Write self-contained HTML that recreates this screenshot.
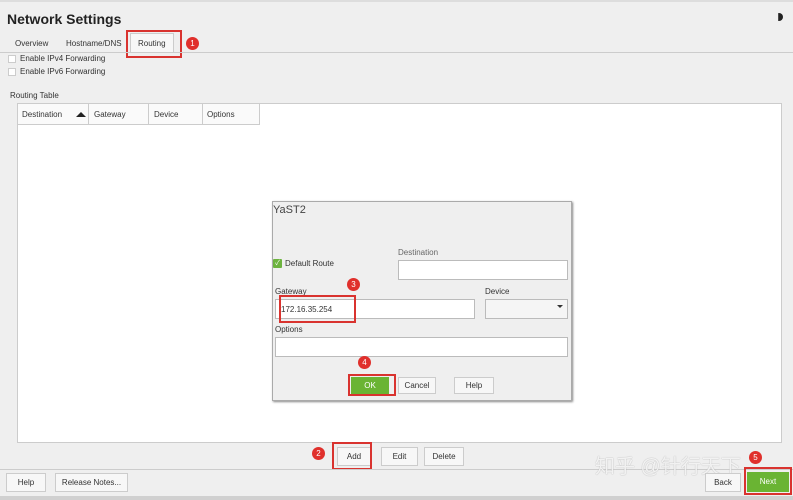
<!DOCTYPE html>
<html><head><style>
*{box-sizing:border-box}
body{margin:0;width:793px;height:500px;background:#efefef;font-family:"Liberation Sans","Noto Sans CJK SC",sans-serif;font-size:8px;color:#333;position:relative;overflow:hidden}
.a{position:absolute}
.btn{position:absolute;background:#f7f7f7;border:1px solid #ccc;font-size:8px;text-align:center;color:#333}
.red{position:absolute;border:2px solid #d9332f}
.num{position:absolute;width:13px;height:13px;border-radius:50%;background:#e0302c;color:#fff;font-size:8px;text-align:center;line-height:13px}
.in{position:absolute;background:#fff;border:1px solid #bbb}
</style></head><body>
<div class="a" style="left:0;top:0;width:793px;height:2px;background:#ddd"></div>
<div class="a" style="left:7px;top:11px;font-size:14px;font-weight:bold;color:#222">Network Settings</div>
<div class="a" style="left:775px;top:13px;width:8px;height:8px;border-radius:50%;background:#222;clip-path:inset(0 0 0 40%)"></div>
<div class="a" style="left:15px;top:39px">Overview</div>
<div class="a" style="left:66px;top:39px">Hostname/DNS</div>
<div class="a" style="left:130px;top:33px;width:44px;height:20px;background:#f7f7f7;border:1px solid #ccc;border-bottom:none"></div>
<div class="a" style="left:138px;top:39px">Routing</div>
<div class="red" style="left:126px;top:30px;width:56px;height:28px"></div>
<div class="num" style="left:186px;top:37px">1</div>
<div class="a" style="left:0;top:52px;width:793px;height:1px;background:#ccc"></div>
<div class="a" style="left:8px;top:55px;width:8px;height:8px;background:#fff;border:1px solid #ccc"></div>
<div class="a" style="left:20px;top:54px">Enable IPv4 Forwarding</div>
<div class="a" style="left:8px;top:68px;width:8px;height:8px;background:#fff;border:1px solid #ccc"></div>
<div class="a" style="left:20px;top:67px">Enable IPv6 Forwarding</div>
<div class="a" style="left:10px;top:91px">Routing Table</div>
<div class="a" style="left:17px;top:103px;width:765px;height:340px;background:#fff;border:1px solid #ccc"></div>
<div class="a" style="left:17px;top:103px;width:243px;height:22px;background:#fafafa;border:1px solid #ccc"></div>
<div class="a" style="left:88px;top:103px;width:1px;height:22px;background:#ccc"></div>
<div class="a" style="left:148px;top:103px;width:1px;height:22px;background:#ccc"></div>
<div class="a" style="left:202px;top:103px;width:1px;height:22px;background:#ccc"></div>
<div class="a" style="left:22px;top:110px">Destination</div>
<div class="a" style="left:76px;top:112px;width:0;height:0;border-left:5px solid transparent;border-right:5px solid transparent;border-bottom:5px solid #222"></div>
<div class="a" style="left:94px;top:110px">Gateway</div>
<div class="a" style="left:154px;top:110px">Device</div>
<div class="a" style="left:207px;top:110px">Options</div>
<!-- dialog -->
<div class="a" style="left:272px;top:201px;width:300px;height:200px;background:#efefef;border:1px solid #aaa;box-shadow:1px 1px 2px #888"></div>
<div class="a" style="left:273px;top:204px;font-size:11px;color:#444">YaST2</div>
<div class="a" style="left:398px;top:248px;color:#666">Destination</div>
<div class="in" style="left:398px;top:260px;width:170px;height:20px"></div>
<div class="a" style="left:273px;top:259px;width:9px;height:9px;background:#6db33f;border-radius:1px;color:#fff;font-size:7px;line-height:9px;text-align:center">✓</div>
<div class="a" style="left:285px;top:259px">Default Route</div>
<div class="a" style="left:275px;top:287px">Gateway</div>
<div class="in" style="left:275px;top:299px;width:200px;height:20px"></div>
<div class="a" style="left:281px;top:305px">172.16.35.254</div>
<div class="red" style="left:279px;top:295px;width:77px;height:28px"></div>
<div class="num" style="left:347px;top:278px">3</div>
<div class="a" style="left:485px;top:287px">Device</div>
<div class="in" style="left:485px;top:299px;width:83px;height:20px;background:#f5f5f5"></div>
<div class="a" style="left:557px;top:305px;width:0;height:0;border-left:3px solid transparent;border-right:3px solid transparent;border-top:3px solid #333"></div>
<div class="a" style="left:275px;top:325px">Options</div>
<div class="in" style="left:275px;top:337px;width:293px;height:20px"></div>
<div class="a" style="left:351px;top:377px;width:38px;height:17px;background:#6ab433;color:#fff;text-align:center;line-height:17px">OK</div>
<div class="red" style="left:348px;top:374px;width:48px;height:22px"></div>
<div class="num" style="left:358px;top:356px">4</div>
<div class="btn" style="left:398px;top:377px;width:38px;height:17px;line-height:15px">Cancel</div>
<div class="btn" style="left:454px;top:377px;width:40px;height:17px;line-height:15px">Help</div>
<!-- bottom buttons -->
<div class="num" style="left:312px;top:447px">2</div>
<div class="btn" style="left:337px;top:447px;width:34px;height:19px;line-height:17px">Add</div>
<div class="red" style="left:332px;top:442px;width:40px;height:28px"></div>
<div class="btn" style="left:381px;top:447px;width:37px;height:19px;line-height:17px">Edit</div>
<div class="btn" style="left:424px;top:447px;width:40px;height:19px;line-height:17px">Delete</div>
<div class="a" style="left:0;top:469px;width:793px;height:1px;background:#ccc"></div>
<div class="btn" style="left:6px;top:473px;width:40px;height:19px;line-height:17px">Help</div>
<div class="btn" style="left:55px;top:473px;width:73px;height:19px;line-height:17px">Release Notes...</div>
<div class="a" style="left:595px;top:450px;font-size:20px;color:rgba(255,255,255,0.85);text-shadow:0 0 1px #999">知乎 @针行天下</div>
<div class="btn" style="left:705px;top:473px;width:36px;height:19px;line-height:17px">Back</div>
<div class="a" style="left:747px;top:472px;width:42px;height:20px;background:#6ab433;color:#fff;text-align:center;line-height:20px">Next</div>
<div class="red" style="left:744px;top:467px;width:48px;height:28px"></div>
<div class="num" style="left:749px;top:451px">5</div>
<div class="a" style="left:0;top:496px;width:793px;height:4px;background:#d0d0d0"></div>
</body></html>
